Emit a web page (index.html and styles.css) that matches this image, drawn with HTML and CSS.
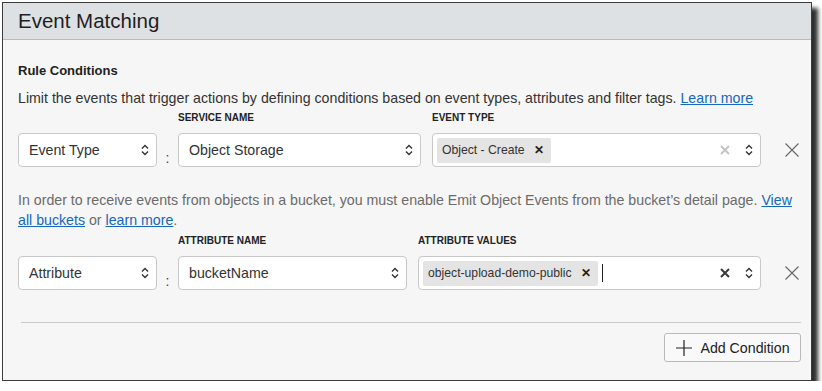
FILE: index.html
```html
<!DOCTYPE html>
<html lang="en">
<head>
    <meta charset="UTF-8">
    <title>Event Matching</title>
    <link rel="stylesheet" href="styles.css">
</head>
<body>
    <div class="panel">
        <div class="panel-header">
            <h2>Event Matching</h2>
        </div>
        <div class="panel-body">
            <h3>Rule Conditions</h3>
            <p class="desc">Limit the events that trigger actions by defining conditions based on event types, attributes and filter tags. <a href="#">Learn more</a></p>

            <div class="cond cond-type">
                <span class="lbl lbl-name">SERVICE NAME</span>
                <span class="lbl lbl-values">EVENT TYPE</span>
                <div class="select sel-kind">Event Type
                    <svg class="chev" width="10" height="14" viewBox="0 0 10 14"><path d="M2 5.5 L5 2.5 L8 5.5 M2 8.5 L5 11.5 L8 8.5" /></svg>
                </div>
                <span class="colon">:</span>
                <div class="select sel-name">Object Storage
                    <svg class="chev" width="10" height="14" viewBox="0 0 10 14"><path d="M2 5.5 L5 2.5 L8 5.5 M2 8.5 L5 11.5 L8 8.5" /></svg>
                </div>
                <div class="multi">
                    <span class="chip">Object - Create <span class="chip-x">&#x2715;</span></span>
                    <span class="spacer"></span>
                    <svg class="clear clear-light" width="12" height="12" viewBox="0 0 12 12"><path d="M2 2 L10 10 M10 2 L2 10" /></svg>
                    <svg class="chev" width="10" height="14" viewBox="0 0 10 14"><path d="M2 5.5 L5 2.5 L8 5.5 M2 8.5 L5 11.5 L8 8.5" /></svg>
                </div>
                <button class="remove"><svg width="16" height="16" viewBox="0 0 16 16"><path d="M1.5 1.5 L14.5 14.5 M14.5 1.5 L1.5 14.5" /></svg></button>
            </div>

            <p class="note">In order to receive events from objects in a bucket, you must enable Emit Object Events from the bucket’s detail page. <a href="#">View</a> <a href="#">all buckets</a> or <a href="#">learn more</a>.</p>

            <div class="cond cond-attr">
                <span class="lbl lbl-name">ATTRIBUTE NAME</span>
                <span class="lbl lbl-values">ATTRIBUTE VALUES</span>
                <div class="select sel-kind">Attribute
                    <svg class="chev" width="10" height="14" viewBox="0 0 10 14"><path d="M2 5.5 L5 2.5 L8 5.5 M2 8.5 L5 11.5 L8 8.5" /></svg>
                </div>
                <span class="colon">:</span>
                <div class="select sel-name">bucketName
                    <svg class="chev" width="10" height="14" viewBox="0 0 10 14"><path d="M2 5.5 L5 2.5 L8 5.5 M2 8.5 L5 11.5 L8 8.5" /></svg>
                </div>
                <div class="multi">
                    <span class="chip">object-upload-demo-public <span class="chip-x">&#x2715;</span></span>
                    <span class="caret"></span>
                    <span class="spacer"></span>
                    <svg class="clear clear-dark" width="12" height="12" viewBox="0 0 12 12"><path d="M2 2 L10 10 M10 2 L2 10" /></svg>
                    <svg class="chev" width="10" height="14" viewBox="0 0 10 14"><path d="M2 5.5 L5 2.5 L8 5.5 M2 8.5 L5 11.5 L8 8.5" /></svg>
                </div>
                <button class="remove"><svg width="16" height="16" viewBox="0 0 16 16"><path d="M1.5 1.5 L14.5 14.5 M14.5 1.5 L1.5 14.5" /></svg></button>
            </div>

            <div class="divider"></div>

            <div class="actions">
                <button class="add-btn">
                    <svg width="18" height="18" viewBox="0 0 18 18"><path d="M9 1 V17 M1 9 H17" /></svg>
                    <span>Add Condition</span>
                </button>
            </div>
        </div>
    </div>
</body>
</html>
```

FILE: styles.css
```css
body {
    margin: 0;
    background: #ffffff;
    font-family: "Liberation Sans", Arial, sans-serif;
    color: #333;
}

.panel {
    position: relative;
    margin: 2px 0 0 2px;
    width: 808px;
    height: 377px;
    border: 1px solid #3c3c3c;
    background: #f6f6f6;
}

/* drop shadow of the window */
.panel::before {
    content: "";
    position: absolute;
    top: 5px;
    left: 3px;
    right: -7px;
    bottom: -8px;
    background: #2e2e2e;
    filter: blur(2px);
    z-index: -1;
}

.panel-header {
    height: 36px;
    background: #dee1e4;
    border-bottom: 1px solid #b7bcc1;
    display: flex;
    align-items: center;
    padding-left: 15px;
}

.panel-header h2 {
    margin: 0;
    font-size: 20.5px;
    font-weight: normal;
    color: #1e1e1e;
}

.panel-body {
    padding: 23px 10px 0 15px;
}

h3 {
    margin: 0;
    font-size: 13px;
    line-height: 16px;
    font-weight: bold;
    color: #222;
}

.desc {
    margin: 9px 0 0;
    font-size: 14.2px;
    line-height: 20px;
    color: #333;
}

a {
    color: #1567c0;
    text-decoration: underline;
}

.cond {
    display: grid;
    grid-template-rows: 12px 34px;
    row-gap: 9px;
    margin-top: 4px;
}

.cond-type {
    grid-template-columns: 139px 21px 243px 11px 329px 1fr;
}

.cond-attr {
    grid-template-columns: 139px 21px 229px 11px 343px 1fr;
    margin-top: 5px;
}

.lbl {
    grid-row: 1;
    font-size: 10px;
    line-height: 12px;
    font-weight: bold;
    color: #222;
}

.lbl-name { grid-column: 3; }
.lbl-values { grid-column: 5; }

.select {
    grid-row: 2;
    display: flex;
    align-items: center;
    justify-content: space-between;
    background: #fff;
    border: 1px solid #c8c8c8;
    border-radius: 4px;
    padding: 0 6px 0 10px;
    font-size: 14.2px;
    color: #333;
}

.sel-kind { grid-column: 1; }
.sel-name { grid-column: 3; }

.chev path {
    fill: none;
    stroke: #333;
    stroke-width: 1.4;
}

.colon {
    grid-row: 2;
    grid-column: 2;
    align-self: end;
    text-align: center;
    font-size: 14px;
    line-height: 14px;
    padding-bottom: 2px;
    color: #444;
}

.multi {
    grid-row: 2;
    grid-column: 5;
    display: flex;
    align-items: center;
    background: #fff;
    border: 1px solid #c8c8c8;
    border-radius: 4px;
    padding: 0 6px 0 4px;
}

.chip {
    display: flex;
    align-items: center;
    height: 25px;
    background: #e4e4e4;
    border-radius: 2px;
    padding: 0 7px 0 5px;
    font-size: 12.2px;
    color: #333;
}

.chip-x {
    margin-left: 9px;
    font-size: 12px;
    font-weight: bold;
    color: #222;
}

.caret {
    width: 1px;
    height: 18px;
    background: #222;
    margin-left: 4px;
}

.spacer {
    flex: 1;
}

.clear {
    margin-right: 13px;
}

.clear path {
    fill: none;
    stroke-width: 2;
}

.clear-light path { stroke: #c4c4c4; }
.clear-dark path { stroke: #3a3a3a; }

.remove {
    grid-row: 2;
    grid-column: 6;
    justify-self: end;
    align-self: center;
    background: none;
    border: none;
    padding: 0 1px 0 0;
    display: flex;
}

.remove path {
    stroke: #666;
    stroke-width: 1.1;
}

.note {
    margin: 23px 0 0;
    max-width: 780px;
    font-size: 14.2px;
    line-height: 20px;
    color: #6b6b6b;
}

.divider {
    height: 1px;
    background: #c9c9c9;
    margin: 32px 0 0 3px;
}

.actions {
    display: flex;
    justify-content: flex-end;
    margin-top: 10px;
}

.add-btn {
    display: flex;
    align-items: center;
    justify-content: center;
    gap: 7px;
    height: 29px;
    width: 137px;
    padding: 0;
    white-space: nowrap;
    background: #f9f9f9;
    border: 1px solid #b9b9b9;
    border-radius: 3px;
    font-family: "Liberation Sans", Arial, sans-serif;
    font-size: 14.2px;
    color: #222;
}

.add-btn path {
    stroke: #222;
    stroke-width: 1.2;
}
```
